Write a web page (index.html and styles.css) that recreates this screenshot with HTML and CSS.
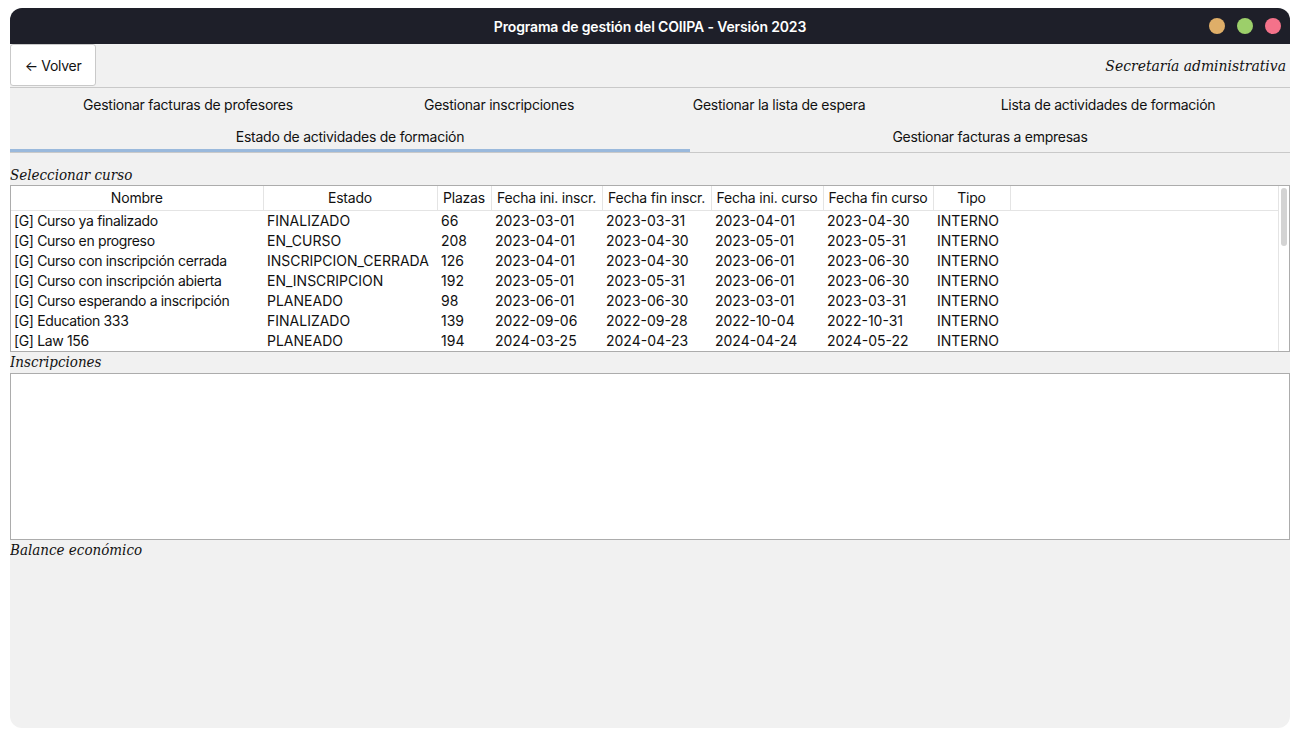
FILE: index.html
```html
<!DOCTYPE html>
<html lang="es">
<head>
<meta charset="utf-8">
<title>COIIPA</title>
<link rel="stylesheet" href="styles.css">
</head>
<body>
<div class="window">
  <header class="titlebar">
    <div></div>
    <div class="title">Programa de gestión del COIIPA - Versión 2023</div>
    <div class="dots"><span class="dot orange"></span><span class="dot green"></span><span class="dot red"></span></div>
  </header>
  <div class="toolbar">
    <button class="back">← Volver</button>
    <span class="role">Secretaría administrativa</span>
  </div>
  <nav class="tabs">
    <div class="tabrow row1">
      <div class="tab">Gestionar facturas de profesores</div>
      <div class="tab">Gestionar inscripciones</div>
      <div class="tab">Gestionar la lista de espera</div>
      <div class="tab">Lista de actividades de formación</div>
    </div>
    <div class="tabrow row2">
      <div class="tab selected">Estado de actividades de formación</div>
      <div class="tab">Gestionar facturas a empresas</div>
    </div>
  </nav>
  <main class="content">
    <div class="label first">Seleccionar curso</div>
    <div class="tablebox">
      <table class="grid">
        <colgroup>
          <col class="c-nombre"><col class="c-estado"><col class="c-plazas"><col class="c-f1"><col class="c-f2"><col class="c-f3"><col class="c-f4"><col class="c-tipo"><col>
        </colgroup>
        <thead>
          <tr><th>Nombre</th><th>Estado</th><th>Plazas</th><th>Fecha ini. inscr.</th><th>Fecha fin inscr.</th><th>Fecha ini. curso</th><th>Fecha fin curso</th><th>Tipo</th><th class="filler"></th></tr>
        </thead>
        <tbody>
          <tr><td class="name">[G] Curso ya finalizado</td><td>FINALIZADO</td><td>66</td><td>2023-03-01</td><td>2023-03-31</td><td>2023-04-01</td><td>2023-04-30</td><td>INTERNO</td><td></td></tr>
          <tr><td class="name">[G] Curso en progreso</td><td>EN_CURSO</td><td>208</td><td>2023-04-01</td><td>2023-04-30</td><td>2023-05-01</td><td>2023-05-31</td><td>INTERNO</td><td></td></tr>
          <tr><td class="name">[G] Curso con inscripción cerrada</td><td>INSCRIPCION_CERRADA</td><td>126</td><td>2023-04-01</td><td>2023-04-30</td><td>2023-06-01</td><td>2023-06-30</td><td>INTERNO</td><td></td></tr>
          <tr><td class="name">[G] Curso con inscripción abierta</td><td>EN_INSCRIPCION</td><td>192</td><td>2023-05-01</td><td>2023-05-31</td><td>2023-06-01</td><td>2023-06-30</td><td>INTERNO</td><td></td></tr>
          <tr><td class="name">[G] Curso esperando a inscripción</td><td>PLANEADO</td><td>98</td><td>2023-06-01</td><td>2023-06-30</td><td>2023-03-01</td><td>2023-03-31</td><td>INTERNO</td><td></td></tr>
          <tr><td class="name">[G] Education 333</td><td>FINALIZADO</td><td>139</td><td>2022-09-06</td><td>2022-09-28</td><td>2022-10-04</td><td>2022-10-31</td><td>INTERNO</td><td></td></tr>
          <tr><td class="name">[G] Law 156</td><td>PLANEADO</td><td>194</td><td>2024-03-25</td><td>2024-04-23</td><td>2024-04-24</td><td>2024-05-22</td><td>INTERNO</td><td></td></tr>
        </tbody>
      </table>
      <div class="scrolltrack"><div class="thumb"></div></div>
    </div>
    <div class="label">Inscripciones</div>
    <div class="emptybox"></div>
    <div class="label">Balance económico</div>
  </main>
</div>
</body>
</html>
```

FILE: styles.css
```css
* { box-sizing: border-box; }
html, body { margin: 0; padding: 0; background: #ffffff; }
body {
  font-family: Inter, "Noto Sans", sans-serif;
  font-size: 14px;
  color: #111111;
}
.window {
  margin: 8px 10px;
  height: 720px;
  border-radius: 12px;
  overflow: hidden;
  background: #f1f1f1;
  display: flex;
  flex-direction: column;
}
.titlebar {
  height: 36px;
  flex: 0 0 36px;
  background: #1e1f29;
  display: grid;
  grid-template-columns: 1fr auto 1fr;
  align-items: center;
}
.title {
  color: #ffffff;
  font-weight: 600;
  font-size: 14px;
  letter-spacing: -0.15px;
}
.dots {
  display: flex;
  justify-content: flex-end;
  gap: 12px;
  padding-right: 9px;
}
.dot {
  width: 16px;
  height: 16px;
  border-radius: 50%;
  display: block;
}
.orange { background: #dfae68; }
.green { background: #9ccf6a; }
.red { background: #f4728a; }
.toolbar {
  height: 44px;
  flex: 0 0 44px;
  display: flex;
  justify-content: space-between;
  align-items: flex-start;
  border-bottom: 1px solid #c9c9c9;
}
.back {
  width: 86px;
  height: 42px;
  background: #ffffff;
  border: 1px solid #c9c9c9;
  border-radius: 3px;
  font-family: Inter, "Noto Sans", sans-serif;
  font-size: 14px;
  color: #111111;
  letter-spacing: -0.3px;
  padding: 0;
}
.role {
  font-family: "DejaVu Serif", serif;
  font-style: italic;
  font-stretch: condensed;
  font-size: 15.5px;
  line-height: 44px;
  padding-right: 4px;
}
.tabs {
  border-bottom: 1px solid #c9c9c9;
}
.tabrow {
  display: grid;
  height: 32px;
}
.row1 { grid-template-columns: 356px 266px 294px 1fr; }
.row2 { grid-template-columns: 680px 1fr; }
.tab {
  display: flex;
  align-items: center;
  justify-content: center;
  height: 32px;
  letter-spacing: -0.25px;
}
.selected {
  box-shadow: inset 0 -3px 0 #9ab9dc;
}
.content {
  flex: 1;
  display: flex;
  flex-direction: column;
}
.label {
  font-family: "DejaVu Serif", serif;
  font-style: italic;
  font-stretch: condensed;
  font-size: 15px;
  height: 21px;
  line-height: 21px;
}
.label.first {
  height: 32px;
  line-height: 20px;
  padding-top: 12px;
}
.tablebox {
  position: relative;
  height: 167px;
  background: #ffffff;
  border: 1px solid #acacac;
  overflow: hidden;
}
.grid {
  border-collapse: collapse;
  table-layout: fixed;
  width: 1267px;
}
.c-nombre { width: 252px; }
.c-estado { width: 174px; }
.c-plazas { width: 54px; }
.c-f1 { width: 111px; }
.c-f2 { width: 109px; }
.c-f3 { width: 112px; }
.c-f4 { width: 110px; }
.c-tipo { width: 77px; }
.grid th {
  height: 24px;
  font-weight: 400;
  text-align: center;
  border-right: 1px solid #e4e4e4;
  border-bottom: 1px solid #e4e4e4;
  padding: 0;
  white-space: nowrap;
  letter-spacing: -0.2px;
  line-height: 22px;
}
.grid th.filler { border-right: none; }
.grid td {
  height: 20px;
  padding: 0 0 0 4px;
  white-space: nowrap;
  overflow: hidden;
  line-height: 20px;
}
.grid td.name {
  letter-spacing: -0.35px;
  padding-left: 3px;
}
.scrolltrack {
  position: absolute;
  top: 0;
  right: 0;
  width: 11px;
  height: 100%;
  background: #ffffff;
  border-left: 1px solid #e4e4e4;
  padding: 2px 2px 0 2px;
}
.thumb {
  width: 6px;
  height: 58px;
  border-radius: 3px;
  background: #d3d3d3;
}
.emptybox {
  height: 167px;
  background: #ffffff;
  border: 1px solid #acacac;
}
```
